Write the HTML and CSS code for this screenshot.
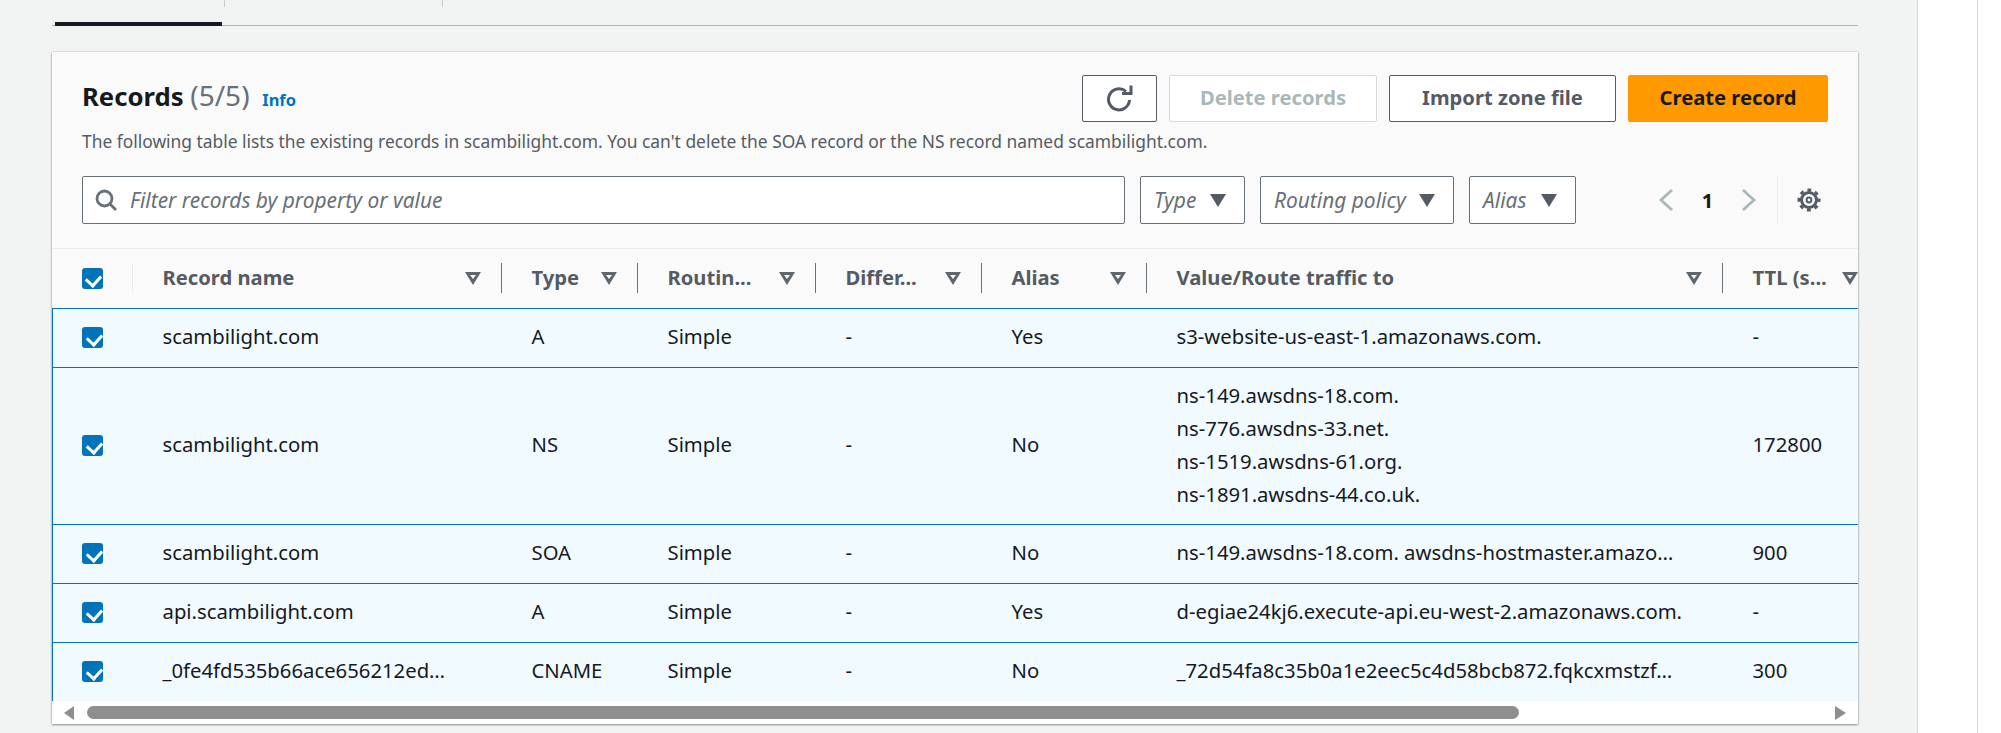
FILE: index.html
```html
<!DOCTYPE html>
<html lang="en">
<head>
    <meta charset="UTF-8">
    <title>Records</title>
    <link rel="stylesheet" href="styles.css">
</head>
<body>
    <div class="page">
        <main class="content">
            <div class="tabs">
                <div class="tab tab-active"></div>
                <div class="tab tab-plain"></div>
            </div>

            <section class="card">
                <header class="card-head">
                    <div class="title-row">
                        <h2 class="title">Records <span class="count">(5/5)</span> <a class="info">Info</a></h2>
                        <div class="actions">
                            <button class="btn btn-icon">
                                <svg width="28" height="28" viewBox="0 0 28 28" fill="none" stroke="#545b64" stroke-width="3">
                                    <path d="M23.5 15A10.500 10.500 0 1 1 20 6.500"/>
                                    <path d="M16 8.500h9v-8"/>
                                </svg>
                            </button>
                            <button class="btn btn-delete" disabled>Delete records</button>
                            <button class="btn btn-import">Import zone file</button>
                            <button class="btn btn-create">Create record</button>
                        </div>
                    </div>
                    <p class="desc">The following table lists the existing records in scambilight.com. You can't delete the SOA record or the NS record named scambilight.com.</p>
                    <div class="filter-row">
                        <div class="search">
                            <svg width="22" height="22" viewBox="0 0 22 22" fill="none" stroke="#687078" stroke-width="2.8">
                                <circle cx="9.5" cy="9.5" r="7.5"/>
                                <path d="M15 15l6 6"/>
                            </svg>
                            <span>Filter records by property or value</span>
                        </div>
                        <div class="select select-type">Type <i class="caret"></i></div>
                        <div class="select select-routing">Routing policy <i class="caret"></i></div>
                        <div class="select select-alias">Alias <i class="caret"></i></div>
                        <div class="pager">
                            <svg width="16" height="24" viewBox="0 0 16 24" fill="none" stroke="#aab7b8" stroke-width="2.8"><path d="M14 2L3 12l11 10"/></svg>
                            <span class="page-num">1</span>
                            <svg width="16" height="24" viewBox="0 0 16 24" fill="none" stroke="#aab7b8" stroke-width="2.8"><path d="M2 2l11 10L2 22"/></svg>
                        </div>
                        <div class="prefs">
                            <svg width="24" height="24" viewBox="0 0 24 24" fill="none" stroke="#545b64">
                                <circle cx="12" cy="12" r="7.500" stroke-width="3"/>
                                <circle cx="12" cy="12" r="10" stroke-width="3" stroke-dasharray="3.850 4" stroke-dashoffset="1.900"/>
                                <circle cx="12" cy="12" r="2.400" stroke-width="2"/>
                            </svg>
                        </div>
                    </div>
                </header>

                <div class="table-clip">
                    <table class="records">
                        <colgroup>
                            <col class="c-check"><col class="c-name"><col class="c-type"><col class="c-routing">
                            <col class="c-differ"><col class="c-alias"><col class="c-value"><col class="c-ttl">
                        </colgroup>
                        <thead>
                            <tr>
                                <th class="check-cell"><div class="th-in th-first"><i class="box"></i></div></th>
                                <th><div class="th-in"><span>Record name</span><i class="sort"></i></div></th>
                                <th><div class="th-in"><span>Type</span><i class="sort"></i></div></th>
                                <th><div class="th-in"><span>Routin...</span><i class="sort"></i></div></th>
                                <th><div class="th-in"><span>Differ...</span><i class="sort"></i></div></th>
                                <th><div class="th-in"><span>Alias</span><i class="sort"></i></div></th>
                                <th><div class="th-in"><span>Value/Route traffic to</span><i class="sort"></i></div></th>
                                <th><div class="th-in"><span>TTL (s...</span><i class="sort"></i></div></th>
                            </tr>
                        </thead>
                        <tbody>
                            <tr>
                                <td class="check-cell"><i class="box"></i></td>
                                <td>scambilight.com</td><td>A</td><td>Simple</td><td>-</td><td>Yes</td>
                                <td>s3-website-us-east-1.amazonaws.com.</td><td>-</td>
                            </tr>
                            <tr class="tall">
                                <td class="check-cell"><i class="box"></i></td>
                                <td>scambilight.com</td><td>NS</td><td>Simple</td><td>-</td><td>No</td>
                                <td>ns-149.awsdns-18.com.<br>ns-776.awsdns-33.net.<br>ns-1519.awsdns-61.org.<br>ns-1891.awsdns-44.co.uk.</td><td>172800</td>
                            </tr>
                            <tr>
                                <td class="check-cell"><i class="box"></i></td>
                                <td>scambilight.com</td><td>SOA</td><td>Simple</td><td>-</td><td>No</td>
                                <td>ns-149.awsdns-18.com. awsdns-hostmaster.amazo…</td><td>900</td>
                            </tr>
                            <tr>
                                <td class="check-cell"><i class="box"></i></td>
                                <td>api.scambilight.com</td><td>A</td><td>Simple</td><td>-</td><td>Yes</td>
                                <td>d-egiae24kj6.execute-api.eu-west-2.amazonaws.com.</td><td>-</td>
                            </tr>
                            <tr>
                                <td class="check-cell"><i class="box"></i></td>
                                <td>_0fe4fd535b66ace656212ed…</td><td>CNAME</td><td>Simple</td><td>-</td><td>No</td>
                                <td>_72d54fa8c35b0a1e2eec5c4d58bcb872.fqkcxmstzf…</td><td>300</td>
                            </tr>
                        </tbody>
                    </table>
                </div>

                <div class="scrollbar">
                    <i class="arrow arrow-left"></i>
                    <div class="thumb"></div>
                    <i class="arrow arrow-right"></i>
                </div>
            </section>
        </main>
        <aside class="rail"></aside>
    </div>
</body>
</html>
```

FILE: styles.css
```css
/* General */
* {
    box-sizing: border-box;
}

html, body {
    height: 100%;
}

body {
    margin: 0;
    overflow: hidden;
    background-color: #fff;
    color: #16191f;
    font-family: "Noto Sans", "Liberation Sans", sans-serif;
    font-size: 18px;
}

.page {
    display: flex;
    height: 733px;
}

.content {
    width: 1918px;
    padding: 0 59px 0 52px;
    background-color: #f2f3f3;
    border-right: 1px solid #d5dbdb;
}

.rail {
    width: 60px;
    border-right: 1px solid #d5dbdb;
}

/* Tabs */
.tabs {
    display: flex;
    height: 26px;
    padding-left: 3px;
    border-bottom: 1px solid #aab7b8;
}

.tab {
    height: 26px;
}

.tab-active {
    width: 167px;
    border-bottom: 4px solid #16191f;
}

.tab-plain {
    width: 219px;
    height: 7px;
    margin-left: 2px;
    border-left: 1px solid #c4cccc;
    border-right: 1px solid #c4cccc;
}

/* Card */
.card {
    height: 672px;
    margin-top: 26px;
    background-color: #fff;
    box-shadow: 0 1px 2px rgba(0, 28, 36, 0.4), 0 0 2px rgba(0, 28, 36, 0.2);
}

.card-head {
    height: 197px;
    padding: 23px 30px 0;
    background-color: #fafafa;
    border-bottom: 1px solid #eaeded;
}

.title-row {
    display: flex;
    justify-content: space-between;
    height: 47px;
}

.title {
    margin: 0;
    font-size: 25.7px;
    font-weight: 700;
    line-height: 41px;
}

.count {
    color: #687078;
    font-size: 28px;
    font-weight: 400;
}

.info {
    margin-left: 6px;
    color: #0073bb;
    font-size: 16.5px;
    font-weight: 700;
}

.actions {
    display: flex;
    gap: 12px;
}

.btn {
    height: 47px;
    padding: 0 0 4px;
    border: 1px solid #545b64;
    border-radius: 2px;
    background-color: #fff;
    color: #545b64;
    font-family: inherit;
    font-size: 20.2px;
    font-weight: 700;
}

.btn-icon {
    display: flex;
    align-items: center;
    justify-content: center;
    width: 75px;
    padding: 0;
}

.btn-delete {
    width: 208px;
    border-color: #d5dbdb;
    color: #aab7b8;
}

.btn-import {
    width: 227px;
}

.btn-create {
    width: 200px;
    border-color: #ff9900;
    background-color: #ff9900;
    color: #16191f;
}

.desc {
    margin: 7px 0 0;
    color: #545b64;
    font-size: 17.4px;
    line-height: 24px;
}

.filter-row {
    display: flex;
    align-items: center;
    margin-top: 23px;
}

.search, .select {
    display: flex;
    align-items: center;
    height: 48px;
    border: 1px solid #687078;
    border-radius: 2px;
    background-color: #fff;
    color: #687078;
    font-size: 20.9px;
    font-style: italic;
}

.search {
    gap: 13px;
    width: 1043px;
    padding-left: 12px;
}

.select {
    justify-content: space-between;
    margin-left: 15px;
    padding: 0 18px 0 13px;
}

.select-type { width: 105px; }
.select-routing { width: 194px; }
.select-alias { width: 107px; }

.caret {
    width: 0;
    height: 0;
    border-left: 8px solid transparent;
    border-right: 8px solid transparent;
    border-top: 13px solid #545b64;
}

.pager {
    display: flex;
    align-items: center;
    justify-content: space-between;
    width: 99px;
    margin-left: 82px;
}

.page-num {
    font-weight: 700;
    font-size: 20px;
}

.prefs {
    display: flex;
    align-items: center;
    height: 48px;
    margin-left: 20px;
    padding-left: 19px;
    border-left: 1px solid #eaeded;
}

/* Table */
.table-clip {
    overflow: hidden;
    height: 452px;
}

.records {
    width: 1956px;
    border-collapse: collapse;
    table-layout: fixed;
}

.c-check { width: 80px; }
.c-name { width: 369px; }
.c-type { width: 136px; }
.c-routing { width: 178px; }
.c-differ { width: 166px; }
.c-alias { width: 165px; }
.c-value { width: 576px; }
.c-ttl { width: 286px; }

th {
    height: 59px;
    padding: 0;
    background-color: #fafafa;
    color: #545b64;
    text-align: left;
}

.th-in {
    display: flex;
    align-items: center;
    justify-content: space-between;
    height: 30px;
    padding: 0 20px 0 30px;
    border-right: 1px solid #687078;
    font-size: 20.2px;
    font-weight: 700;
}

.th-in span {
    margin-bottom: 2px;
}

.th-first {
    padding: 0 0 0 29px;
    border-right-color: #eaeded;
}

th:last-child .th-in {
    justify-content: flex-start;
    gap: 15px;
    border-right: 0;
}

.sort {
    position: relative;
    width: 0;
    height: 0;
    border-left: 8px solid transparent;
    border-right: 8px solid transparent;
    border-top: 13px solid #5f666e;
}

.sort::after {
    content: "";
    position: absolute;
    left: -3px;
    top: -10px;
    border-left: 3px solid transparent;
    border-right: 3px solid transparent;
    border-top: 4px solid #fafafa;
}

td {
    height: 59px;
    padding: 0 0 2px 30px;
    background-color: #f1faff;
    font-size: 20.3px;
    line-height: 33px;
    white-space: nowrap;
}

td.check-cell {
    padding: 0 0 0 29px;
    border-left: 1px solid #0073bb;
}

tbody tr {
    border-top: 1px solid #0073bb;
    border-bottom: 1px solid #0073bb;
}

.tall td {
    height: 157px;
}

.box {
    display: block;
    position: relative;
    width: 21px;
    height: 21px;
    border-radius: 3px;
    background-color: #0073bb;
}

.box::after {
    content: "";
    position: absolute;
    left: 6.5px;
    top: 4px;
    width: 8px;
    height: 11px;
    border-right: 3px solid #fff;
    border-bottom: 3px solid #fff;
    transform: rotate(42deg);
}

/* Scrollbar */
.scrollbar {
    display: flex;
    align-items: center;
    justify-content: space-between;
    height: 23px;
    padding: 0 12px;
}

.thumb {
    width: 1432px;
    height: 13px;
    margin-right: auto;
    margin-left: 13px;
    border-radius: 7px;
    background-color: #8e8e8e;
}

.arrow {
    width: 0;
    height: 0;
    border-top: 7px solid transparent;
    border-bottom: 7px solid transparent;
}

.arrow-left {
    border-right: 10px solid #8e8e8e;
}

.arrow-right {
    border-left: 11px solid #8e8e8e;
}
```
